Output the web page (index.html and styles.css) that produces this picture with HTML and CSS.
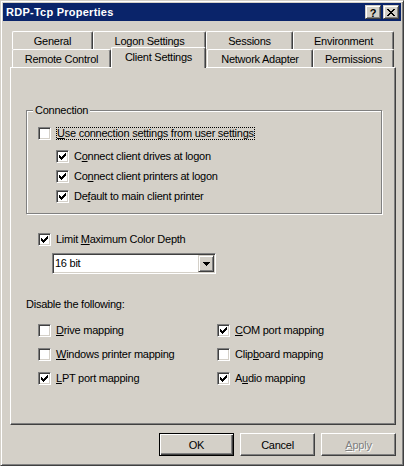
FILE: index.html
```html
<!DOCTYPE html>
<html>
<head>
<meta charset="utf-8">
<title>RDP-Tcp Properties</title>
<link rel="stylesheet" href="styles.css">
</head>
<body>
<div class="window">
  <div class="titlebar">
    <span class="title">RDP-Tcp Properties</span>
    <div class="caption-buttons">
      <span class="cap-btn help">?</span>
      <span class="cap-btn close">
        <svg width="8" height="7" viewBox="0 0 8 7" shape-rendering="crispEdges"><path d="M0 0h2v1h-2z M6 0h2v1h-2z M1 1h2v1h-2z M5 1h2v1h-2z M2 2h4v1h-4z M3 3h2v1h-2z M2 4h4v1h-4z M1 5h2v1h-2z M5 5h2v1h-2z M0 6h2v1h-2z M6 6h2v1h-2z" fill="#000"/></svg>
      </span>
    </div>
  </div>

  <div class="client">
    <div class="tabs">
      <div class="tab-row">
        <div class="tab t-general">General</div>
        <div class="tab t-logon">Logon Settings</div>
        <div class="tab t-sessions">Sessions</div>
        <div class="tab t-env">Environment</div>
      </div>
      <div class="tab-row">
        <div class="tab t-remote">Remote Control</div>
        <div class="tab t-client selected">Client Settings</div>
        <div class="tab t-network">Network Adapter</div>
        <div class="tab t-perm">Permissions</div>
      </div>
    </div>

    <div class="panel">
      <fieldset class="group">
        <legend>Connection</legend>
        <div class="group-body">
          <div class="check">
            <span class="box"></span>
            <span class="label focus"><u>U</u>se connection settings from user settings</span>
          </div>
          <div class="sub">
            <div class="check">
              <span class="box"><svg width="7" height="7" viewBox="0 0 7 7" shape-rendering="crispEdges"><path d="M0 2h1v1h1v1h1v-1h1v-1h1v-1h1v-1h1v3h-1v1h-1v1h-1v1h-1v1h-1v-1h-1v-1h-1z" fill="#000"/></svg></span>
              <span class="label">C<u>o</u>nnect client drives at logon</span>
            </div>
            <div class="check">
              <span class="box"><svg width="7" height="7" viewBox="0 0 7 7" shape-rendering="crispEdges"><path d="M0 2h1v1h1v1h1v-1h1v-1h1v-1h1v-1h1v3h-1v1h-1v1h-1v1h-1v1h-1v-1h-1v-1h-1z" fill="#000"/></svg></span>
              <span class="label">Co<u>n</u>nect client printers at logon</span>
            </div>
            <div class="check">
              <span class="box"><svg width="7" height="7" viewBox="0 0 7 7" shape-rendering="crispEdges"><path d="M0 2h1v1h1v1h1v-1h1v-1h1v-1h1v-1h1v3h-1v1h-1v1h-1v1h-1v1h-1v-1h-1v-1h-1z" fill="#000"/></svg></span>
              <span class="label">De<u>f</u>ault to main client printer</span>
            </div>
          </div>
        </div>
      </fieldset>

      <div class="check limit">
        <span class="box"><svg width="7" height="7" viewBox="0 0 7 7" shape-rendering="crispEdges"><path d="M0 2h1v1h1v1h1v-1h1v-1h1v-1h1v-1h1v3h-1v1h-1v1h-1v1h-1v1h-1v-1h-1v-1h-1z" fill="#000"/></svg></span>
        <span class="label">Limit <u>M</u>aximum Color Depth</span>
      </div>

      <div class="combo">
        <span class="combo-text">16 bit</span>
        <span class="combo-btn"><svg width="7" height="4" viewBox="0 0 7 4" shape-rendering="crispEdges"><path d="M0 0h7v1h-1v1h-1v1h-1v1h-1v-1h-1v-1h-1v-1h-1z" fill="#000"/></svg></span>
      </div>

      <div class="caption">Disable the following:</div>

      <div class="grid">
        <div class="check">
          <span class="box"></span>
          <span class="label"><u>D</u>rive mapping</span>
        </div>
        <div class="check">
          <span class="box"><svg width="7" height="7" viewBox="0 0 7 7" shape-rendering="crispEdges"><path d="M0 2h1v1h1v1h1v-1h1v-1h1v-1h1v-1h1v3h-1v1h-1v1h-1v1h-1v1h-1v-1h-1v-1h-1z" fill="#000"/></svg></span>
          <span class="label"><u>C</u>OM port mapping</span>
        </div>
        <div class="check">
          <span class="box"></span>
          <span class="label"><u>W</u>indows printer mapping</span>
        </div>
        <div class="check">
          <span class="box"></span>
          <span class="label">Clip<u>b</u>oard mapping</span>
        </div>
        <div class="check">
          <span class="box"><svg width="7" height="7" viewBox="0 0 7 7" shape-rendering="crispEdges"><path d="M0 2h1v1h1v1h1v-1h1v-1h1v-1h1v-1h1v3h-1v1h-1v1h-1v1h-1v1h-1v-1h-1v-1h-1z" fill="#000"/></svg></span>
          <span class="label"><u>L</u>PT port mapping</span>
        </div>
        <div class="check">
          <span class="box"><svg width="7" height="7" viewBox="0 0 7 7" shape-rendering="crispEdges"><path d="M0 2h1v1h1v1h1v-1h1v-1h1v-1h1v-1h1v3h-1v1h-1v1h-1v1h-1v1h-1v-1h-1v-1h-1z" fill="#000"/></svg></span>
          <span class="label">A<u>u</u>dio mapping</span>
        </div>
      </div>
    </div>

    <div class="buttons">
      <button class="btn default">OK</button>
      <button class="btn">Cancel</button>
      <button class="btn disabled"><u>A</u>pply</button>
    </div>
  </div>
</div>
</body>
</html>
```

FILE: styles.css
```css
* {
  box-sizing: border-box;
}

html,
body {
  margin: 0;
  padding: 0;
}

body {
  width: 404px;
  height: 466px;
  overflow: hidden;
  background: #d4d0c8;
  font-family: "Liberation Sans", Arial, sans-serif;
  font-size: 11px;
  letter-spacing: -0.25px;
  color: #000;
}

.window {
  width: 404px;
  height: 466px;
  display: flex;
  flex-direction: column;
  padding: 2px;
  background: #d4d0c8;
  border: 1px solid;
  border-color: #d4d0c8 #404040 #404040 #d4d0c8;
  box-shadow: inset 1px 1px #fff, inset -1px -1px #808080;
}

/* title bar */
.titlebar {
  flex: none;
  height: 18px;
  background: #0a246a;
  display: flex;
  align-items: center;
  justify-content: space-between;
  padding: 0 2px 0 3px;
}

.title {
  color: #fff;
  font-weight: bold;
  letter-spacing: 0.25px;
}

.caption-buttons {
  display: flex;
  gap: 2px;
}

.cap-btn {
  width: 16px;
  height: 14px;
  background: #d4d0c8;
  border: 1px solid;
  border-color: #d4d0c8 #404040 #404040 #d4d0c8;
  box-shadow: inset 1px 1px #fff, inset -1px -1px #808080;
  display: flex;
  align-items: center;
  justify-content: center;
}

.cap-btn.help {
  font-weight: bold;
  font-size: 11px;
  line-height: 10px;
  letter-spacing: 0;
  padding-top: 1px;
}

.cap-btn.close svg {
  display: block;
}

/* client area */
.client {
  flex: 1;
  display: flex;
  flex-direction: column;
  padding: 10px 5px 7px 7px;
}

/* tabs */
.tabs {
  flex: none;
  padding-left: 2px;
}

.tab-row {
  display: flex;
  height: 18px;
}

.tab {
  flex: none;
  height: 18px;
  background: #d4d0c8;
  border-top: 1px solid #fff;
  border-left: 1px solid #fff;
  border-right: 1px solid #404040;
  border-top-left-radius: 2px;
  border-top-right-radius: 2px;
  box-shadow: inset -1px 0 #808080;
  display: flex;
  align-items: center;
  justify-content: center;
  padding-top: 1px;
  white-space: nowrap;
}

.t-general { width: 81px; }
.t-logon { width: 113px; }
.t-sessions { width: 87px; }
.t-env { width: 101px; }

.t-remote { width: 99px; }
.t-client { width: 95px; }
.t-network { width: 106px; margin-left: 1px; }
.t-perm { width: 81px; }

.tab.selected {
  position: relative;
  z-index: 1;
  height: 21px;
  margin-top: -2px;
  margin-bottom: -1px;
  padding-top: 0;
  padding-bottom: 2px;
}

/* panel */
.panel {
  flex: 1;
  border: 1px solid;
  border-color: #fff #404040 #404040 #fff;
  box-shadow: inset -1px -1px #808080;
  padding: 36px 0 0 15px;
}

/* group box */
.group {
  margin: 0;
  padding: 0;
  width: 356px;
  min-inline-size: 0;
  border: 1px solid #808080;
  box-shadow: inset 1px 1px #fff, 1px 1px #fff;
}

.group legend {
  margin-left: 6px;
  padding: 0 2px;
  line-height: 13px;
  height: 13px;
  background: #d4d0c8;
}

.group-body {
  padding: 10px 0 10px 11px;
}

.sub {
  margin: 10px 0 0 18px;
}

.sub .check + .check {
  margin-top: 7px;
}

/* checkbox rows */
.check {
  display: flex;
  align-items: center;
  gap: 5px;
  height: 13px;
  line-height: 13px;
  white-space: nowrap;
}

.box {
  flex: none;
  width: 13px;
  height: 13px;
  background: #fff;
  border: 1px solid;
  border-color: #808080 #fff #fff #808080;
  box-shadow: inset 1px 1px #404040, inset -1px -1px #d4d0c8;
  display: flex;
  align-items: center;
  justify-content: center;
}

.box svg {
  display: block;
}

.label.focus {
  line-height: 11px;
  border: 1px dotted #000;
}

.check.limit {
  margin: 19px 0 0 12px;
}

/* combo */
.combo {
  width: 164px;
  height: 21px;
  margin: 7px 0 0 26px;
  padding: 1px;
  display: flex;
  background: #fff;
  border: 1px solid;
  border-color: #808080 #fff #fff #808080;
  box-shadow: inset 1px 1px #404040, inset -1px -1px #d4d0c8;
}

.combo-text {
  flex: 1;
  align-self: center;
  padding-left: 1px;
  line-height: 13px;
}

.combo-btn {
  flex: none;
  width: 16px;
  background: #d4d0c8;
  border: 1px solid;
  border-color: #d4d0c8 #404040 #404040 #d4d0c8;
  box-shadow: inset 1px 1px #fff, inset -1px -1px #808080;
  display: flex;
  align-items: center;
  justify-content: center;
}

.combo-btn svg {
  display: block;
}

.caption {
  margin-top: 24px;
  line-height: 13px;
}

.grid {
  margin: 13px 0 0 12px;
  display: grid;
  grid-template-columns: 179px auto;
  row-gap: 11px;
}

/* buttons */
.buttons {
  flex: none;
  display: flex;
  justify-content: flex-end;
  gap: 6px;
  margin-top: 8px;
}

.btn {
  width: 75px;
  height: 23px;
  padding: 0;
  margin: 0;
  font: inherit;
  letter-spacing: inherit;
  color: #000;
  background: #d4d0c8;
  border: 1px solid;
  border-color: #fff #404040 #404040 #fff;
  box-shadow: inset -1px -1px #808080;
  border-radius: 0;
  appearance: none;
}

.btn.default {
  border: 1px solid #000;
  box-shadow: inset 1px 1px #fff, inset -1px -1px #404040, inset -2px -2px #808080;
}

.btn.disabled {
  color: #808080;
  text-shadow: 1px 1px 0 #fff;
}
```
